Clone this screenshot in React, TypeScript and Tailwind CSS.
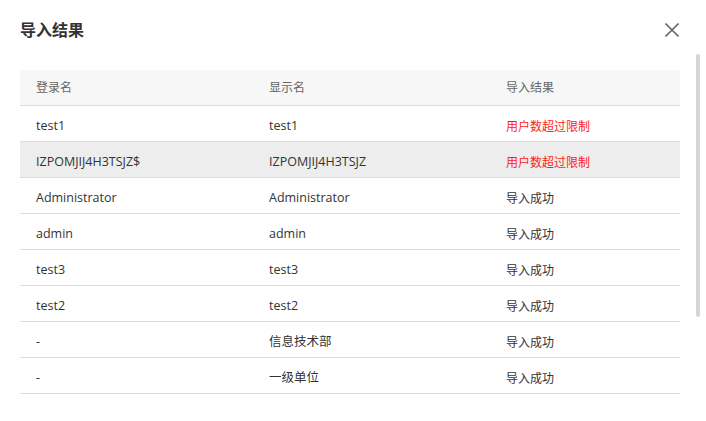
import React from 'react';

type Row = { login: string; display: string; result: string; failed?: boolean };

const rows: Row[] = [
  { login: 'test1', display: 'test1', result: '用户数超过限制', failed: true },
  { login: 'IZPOMJIJ4H3TSJZ$', display: 'IZPOMJIJ4H3TSJZ', result: '用户数超过限制', failed: true },
  { login: 'Administrator', display: 'Administrator', result: '导入成功' },
  { login: 'admin', display: 'admin', result: '导入成功' },
  { login: 'test3', display: 'test3', result: '导入成功' },
  { login: 'test2', display: 'test2', result: '导入成功' },
  { login: '-', display: '信息技术部', result: '导入成功' },
  { login: '-', display: '一级单位', result: '导入成功' },
];

const font = { fontFamily: '"Open Sans", "Noto Sans CJK SC", sans-serif' };

export default function App() {
  const hovered = 1;
  return (
    <div className="w-[706px] h-[421px] bg-white overflow-hidden text-[#333]" style={font}>
      <header className="flex items-center justify-between pl-5 pr-[26px] h-[54px] pt-[6px]">
        <h2 className="text-[16px] font-semibold leading-6 text-[#333]">导入结果</h2>
        <button type="button" className="w-4 h-4 flex items-center justify-center text-[#666]">
          <svg width="16" height="16" viewBox="0 0 16 16" fill="none" stroke="currentColor" strokeWidth="1.7">
            <path d="M1.5 1.5 L14.5 14.5 M14.5 1.5 L1.5 14.5" />
          </svg>
        </button>
      </header>

      <div className="flex">
        <div className="pl-5 pt-4 w-[680px]">
          <table className="w-[660px] table-fixed border-collapse text-[12.5px]">
            <colgroup>
              <col className="w-[233px]" />
              <col className="w-[237px]" />
              <col />
            </colgroup>
            <thead>
              <tr className="bg-[#f7f7f7] h-[35px] border-b border-[#dcdcdc] text-[#666] text-[12px]">
                <th className="text-left font-normal pl-4 pt-[2px]">登录名</th>
                <th className="text-left font-normal pl-4 pt-[2px]">显示名</th>
                <th className="text-left font-normal pl-4 pt-[2px]">导入结果</th>
              </tr>
            </thead>
            <tbody>
              {rows.map((r, i) => (
                <tr
                  key={i}
                  className={`h-[36px] border-b border-[#dcdcdc] ${i === hovered ? 'bg-[#ededed]' : 'bg-white'}`}
                >
                  <td className="pl-4 pt-[7px] text-[#333]">{r.login}</td>
                  <td className="pl-4 pt-[7px] text-[#333]">{r.display}</td>
                  <td className={`pl-4 pt-[7px] text-[12px] ${r.failed ? 'text-[#ff1a1a]' : 'text-[#333]'}`}>{r.result}</td>
                </tr>
              ))}
            </tbody>
          </table>
        </div>
        <div className="ml-4 w-1 h-[263px] rounded-full bg-[#d6d6d6]" />
      </div>
    </div>
  );
}
